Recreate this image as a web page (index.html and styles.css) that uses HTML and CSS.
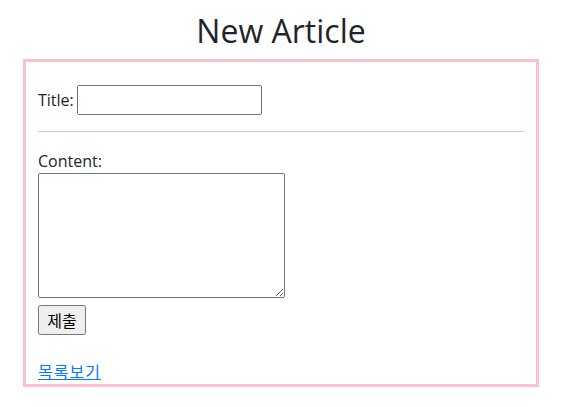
FILE: index.html
```html
<!DOCTYPE html>
<html lang="ko">
<head>
<meta charset="utf-8">
<title>New Article</title>
<link rel="stylesheet" href="styles.css">
</head>
<body>
<div class="page">
  <h1 class="heading">New Article</h1>
  <div class="card">
    <form class="form">
      <div class="row">
        <label class="label" for="title">Title:</label>
        <input class="input-title" id="title" type="text">
      </div>
      <hr class="divider">
      <div class="field">
        <label class="label" for="content">Content:</label>
        <textarea class="textarea" id="content"></textarea>
      </div>
      <button class="submit" type="submit">제출</button>
    </form>
    <a class="link" href="#">목록보기</a>
  </div>
</div>
</body>
</html>
```
FILE: styles.css
```css
html, body {
  margin: 0;
  padding: 0;
  background: #fff;
}
body {
  font-family: "Open Sans", "Noto Sans CJK KR", sans-serif;
  font-size: 16px;
  line-height: 1.5;
  color: #212529;
}
.page {
  width: 516px;
  margin-left: 23px;
}
.heading {
  margin: 12px 0 9px;
  font-size: 32px;
  font-weight: 400;
  line-height: 38px;
  text-align: center;
}
.card {
  border: 3px solid #ffc0cb;
  padding: 23px 12px 1px;
  display: flex;
  flex-direction: column;
  align-items: flex-start;
}
.form {
  display: flex;
  flex-direction: column;
  align-items: flex-start;
  width: 100%;
}
.row {
  display: flex;
  align-items: center;
  gap: 3px;
  height: 30px;
}
.label {
  font-size: 16px;
  line-height: 24px;
}
.input-title {
  width: 185px;
  height: 30px;
  box-sizing: border-box;
  margin: 0;
  font-size: 16px;
}
.divider {
  width: 100%;
  margin: 16px 0 17px;
  border: 0;
  border-top: 1px solid #cfcfcf;
}
.field {
  display: flex;
  flex-direction: column;
  align-items: flex-start;
}
.textarea {
  width: 247px;
  height: 125px;
  box-sizing: border-box;
  margin: 0;
  font-size: 16px;
}
.submit {
  margin-top: 7px;
  width: 48px;
  height: 30px;
  box-sizing: border-box;
  padding: 0;
  font-family: "Noto Sans CJK KR", sans-serif;
  font-size: 16px;
  color: #000;
}
.link {
  margin-top: 24px;
  color: #007bff;
  text-decoration: underline;
  font-family: "Noto Sans CJK KR", sans-serif;
  letter-spacing: 1px;
  line-height: 24px;
}
```
